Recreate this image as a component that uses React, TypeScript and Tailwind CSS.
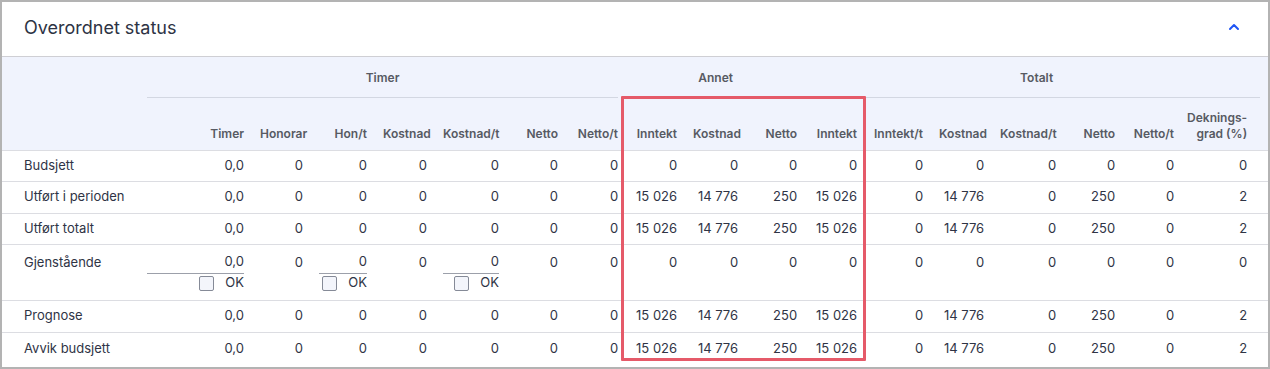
import { ChevronUp } from "lucide-react";

const widths = [137, 113, 59, 64, 60, 72, 59, 60, 59, 61, 59, 60, 66, 61, 72, 59, 59, 86];

const columns = [
  "Timer",
  "Honorar",
  "Hon/t",
  "Kostnad",
  "Kostnad/t",
  "Netto",
  "Netto/t",
  "Inntekt",
  "Kostnad",
  "Netto",
  "Inntekt",
  "Inntekt/t",
  "Kostnad",
  "Kostnad/t",
  "Netto",
  "Netto/t",
];

const zeros = ["0,0", "0", "0", "0", "0", "0", "0", "0", "0", "0", "0", "0", "0", "0", "0", "0", "0"];
const done = [
  "0,0", "0", "0", "0", "0", "0", "0",
  "15\u00a0026", "14\u00a0776", "250",
  "15\u00a0026", "0", "14\u00a0776", "0", "250", "0", "2",
];

const rows = [
  { label: "Budsjett", values: zeros, h: "h-[31px]" },
  { label: "Utført i perioden", values: done, h: "h-[32px]" },
  { label: "Utført totalt", values: done, h: "h-[31px]" },
  { label: "Gjenstående", values: zeros, h: "h-[56px]", inputs: [0, 2, 4] },
  { label: "Prognose", values: done, h: "h-[32px]" },
  { label: "Avvik budsjett", values: done, h: "h-[32px]" },
];

const GroupHead = ({ title, span }: { title: string; span: number }) => (
  <th colSpan={span} className="h-[41px] px-2 align-bottom font-semibold">
    <div className="border-b border-[#d3d7e2] pb-[11px] text-center leading-4">{title}</div>
  </th>
);

const App = () => {
  return (
    <div
      className="relative h-[369px] w-[1270px] overflow-hidden border-2 border-[#b3b3b3] bg-white text-[#2f3445]"
      style={{ fontFamily: "Inter, 'Noto Sans', sans-serif" }}
    >
      <div className="flex h-[55px] items-center justify-between border-b border-[#cfcfd4] pb-1 pl-[22px] pr-[26px]">
        <h2 className="text-[18px] font-normal text-[#2d3344]">Overordnet status</h2>
        <ChevronUp size={16} strokeWidth={3} className="text-[#1f55f5]" />
      </div>

      <table className="w-full table-fixed border-collapse text-[13px]">
        <colgroup>
          {widths.map((w, i) => (
            <col key={i} style={{ width: w }} />
          ))}
        </colgroup>
        <thead className="bg-[#f0f3fd] text-[12px] text-[#575a63]">
          <tr>
            <th />
            <GroupHead title="Timer" span={7} />
            <GroupHead title="Annet" span={3} />
            <GroupHead title="Totalt" span={7} />
          </tr>
          <tr className="h-[52px] border-b border-[#dcdde2]">
            <th />
            {columns.map((c, i) => (
              <th key={i} className="px-2 pb-2 text-right align-bottom font-semibold leading-4 whitespace-nowrap">
                {c}
              </th>
            ))}
            <th className="pb-2 pr-[21px] text-right align-bottom font-semibold leading-4">
              Deknings-
              <br />
              grad (%)
            </th>
          </tr>
        </thead>
        <tbody>
          {rows.map((row) =>
            row.inputs ? (
              <tr key={row.label} className={`${row.h} border-b border-[#dcdde2]`}>
                <td className="pl-[22px] pt-[7px] align-top">
                  <div className="flex h-[22px] items-center">{row.label}</div>
                </td>
                {row.values.map((v, i) => (
                  <td key={i} className={`pt-[7px] align-top ${i === 16 ? "pr-[21px]" : "px-2"}`}>
                    {row.inputs!.includes(i) ? (
                      <div>
                        <div className="flex h-[22px] items-center justify-end border-b border-[#9ca0aa]">{v}</div>
                        <div className="mt-[2px] flex h-[15px] items-center justify-end gap-[11px]">
                          <span className="h-[15px] w-[15px] rounded-[2px] border border-[#858a97] bg-[#f3f5fb]" />
                          <span>OK</span>
                        </div>
                      </div>
                    ) : (
                      <div className="flex h-[22px] items-center justify-end">{v}</div>
                    )}
                  </td>
                ))}
              </tr>
            ) : (
              <tr key={row.label} className={`${row.h} border-b border-[#dcdde2] last:border-b-0`}>
                <td className="pl-[22px] whitespace-nowrap">{row.label}</td>
                {row.values.map((v, i) => (
                  <td key={i} className={`text-right whitespace-nowrap ${i === 16 ? "pr-[21px]" : "px-2"}`}>
                    {v}
                  </td>
                ))}
              </tr>
            )
          )}
        </tbody>
      </table>

      <div className="pointer-events-none absolute left-[619px] top-[94px] h-[265px] w-[245px] rounded-[1px] border-[3px] border-[#e55a69]" />
    </div>
  );
};

export default App;
